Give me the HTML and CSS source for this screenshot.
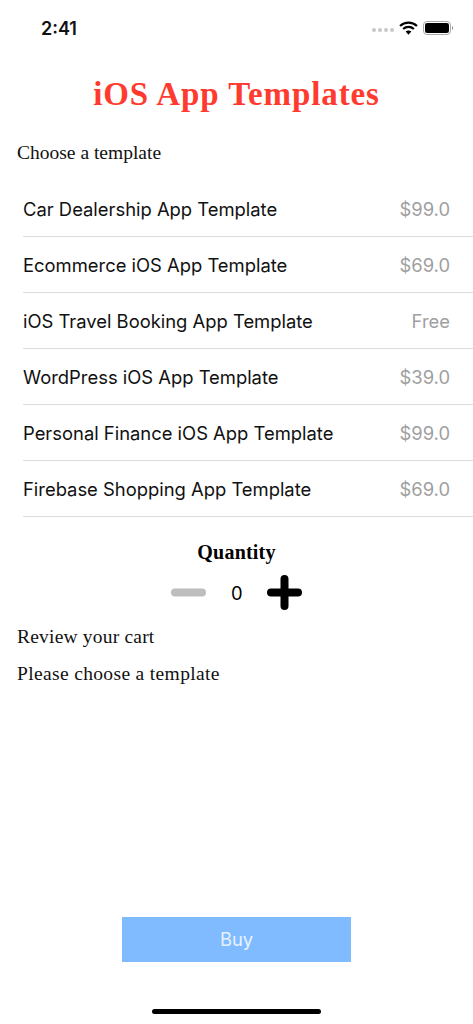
FILE: index.html
```html
<!DOCTYPE html>
<html lang="en">
<head>
<meta charset="utf-8">
<title>iOS App Templates</title>
<link rel="stylesheet" href="styles.css">
</head>
<body>
<div class="screen">
  <header class="status">
    <span class="time">2:41</span>
    <div class="status-icons">
      <div class="signal"><i></i><i></i><i></i><i></i></div>
      <svg class="wifi" width="19" height="14" viewBox="0 0 18 13"><path d="M1 4.600a11.500 11.500 0 0 1 16 0M3.900 7.500a7.400 7.400 0 0 1 10.200 0" fill="none" stroke="#000" stroke-width="2.100"/><path d="M6.300 9.900a3.800 3.800 0 0 1 5.400 0L9 12.800z" fill="#000"/></svg>
      <svg class="battery" width="31" height="14" viewBox="0 0 31 14"><rect x=".5" y=".5" width="27" height="13" rx="3.500" fill="none" stroke="#aaa"/><rect x="2" y="2" width="24" height="10" rx="2.200" fill="#000"/><path d="M29 5v4a2 2 0 0 0 1.200-2A2 2 0 0 0 29 5z" fill="#999"/></svg>
    </div>
  </header>
  <h1 class="title">iOS App Templates</h1>
  <p class="serif choose">Choose a template</p>
  <ul class="list">
    <li class="row"><span>Car Dealership App Template</span><span class="price">$99.0</span></li>
    <li class="row"><span>Ecommerce iOS App Template</span><span class="price">$69.0</span></li>
    <li class="row"><span>iOS Travel Booking App Template</span><span class="price">Free</span></li>
    <li class="row"><span>WordPress iOS App Template</span><span class="price">$39.0</span></li>
    <li class="row"><span>Personal Finance iOS App Template</span><span class="price">$99.0</span></li>
    <li class="row"><span>Firebase Shopping App Template</span><span class="price">$69.0</span></li>
  </ul>
  <h2 class="qty-label">Quantity</h2>
  <div class="stepper">
    <svg width="35" height="35" viewBox="0 0 35 35"><path d="M4 17.500h27" stroke="#bdbdbd" stroke-width="8" stroke-linecap="round"/></svg>
    <span class="count">0</span>
    <svg width="35" height="35" viewBox="0 0 35 35"><path d="M4 17.500h27M17.500 4v27" stroke="#000" stroke-width="8" stroke-linecap="round"/></svg>
  </div>
  <p class="serif review">Review your cart</p>
  <p class="serif please">Please choose a template</p>
  <div class="spacer"></div>
  <button class="buy">Buy</button>
  <div class="home"></div>
</div>
</body>
</html>
```

FILE: styles.css
```css
* { box-sizing: border-box; }
html, body { margin: 0; padding: 0; background: #fff; }
.screen { width: 473px; height: 1024px; display: flex; flex-direction: column; overflow: hidden; font-family: Inter, "Liberation Sans", sans-serif; color: #000; }
.status { height: 56px; flex: none; display: flex; justify-content: space-between; align-items: center; padding: 0 0 0 41px; }
.time { font-size: 18px; font-weight: 600; color: #111; }
.status-icons { display: flex; align-items: center; margin-right: 19px; }
.signal { display: flex; gap: 2px; margin: 4px 5px 0 0; }
.signal i { width: 4px; height: 4px; border-radius: 50%; background: #c8c8c8; }
.wifi { margin-right: 5px; }
.title { margin: 19px 0 0; text-align: center; font: bold 33px/38px "Liberation Serif", serif; letter-spacing: .9px; color: #ff3b30; }
.serif { margin: 0; font-family: "Liberation Serif", serif; font-size: 19.500px; padding-left: 17px; color: #111; }
.choose { margin-top: 28px; line-height: 24px; }
.list { list-style: none; padding: 0 0 0 23px; margin: 16px 0 0; }
.row { height: 56px; display: flex; justify-content: space-between; align-items: center; border-bottom: 1px solid #dcdcdc; padding: 0 23px 0 0; font-size: 18.400px; color: #111; }
.price { color: #a0a0a0; }
.qty-label { margin: 23px 0 0; text-align: center; font: bold 20px/24px "Liberation Serif", serif; letter-spacing: .2px; }
.stepper { margin-top: 11px; display: flex; justify-content: center; align-items: center; gap: 25px; height: 35px; }
.count { font-size: 18.400px; width: 11px; text-align: center; }
.review { margin-top: 15px; line-height: 24px; letter-spacing: .2px; }
.please { margin-top: 13px; line-height: 24px; letter-spacing: .350px; }
.spacer { flex: 1; }
.buy { width: 229px; height: 45px; align-self: center; flex: none; border: 0; padding: 0 0 2px; background: #80bbff; color: #e8f2ff; font: 18.400px Inter, "Liberation Sans", sans-serif; }
.home { width: 169px; height: 5px; border-radius: 3px; background: #000; align-self: center; margin: 47px 0 10px; flex: none; }
```
